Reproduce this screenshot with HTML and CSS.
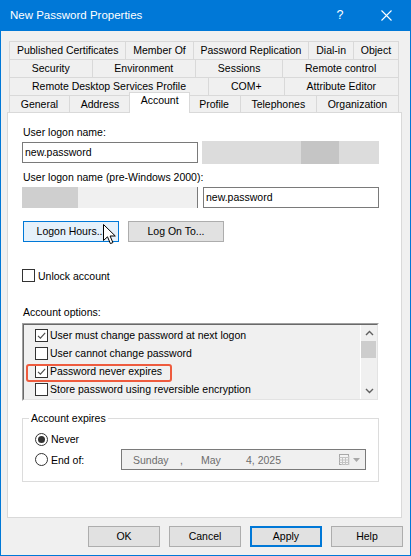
FILE: index.html
```html
<!DOCTYPE html>
<html lang="en">
<head>
<meta charset="utf-8">
<title>New Password Properties</title>
<link rel="stylesheet" href="styles.css">
</head>
<body>
<div class="window">
  <div class="titlebar">
    <span class="title">New Password Properties</span>
    <span class="caption-btn help">?</span>
    <span class="caption-btn close">
      <svg width="11" height="11" viewBox="0 0 11 11"><path d="M0.5 0.5 L10.5 10.5 M10.5 0.5 L0.5 10.5" stroke="#fff" stroke-width="1.1" fill="none"/></svg>
    </span>
  </div>

  <div class="body">
    <div class="tabs">
      <div class="tabrow">
        <div class="tab">Published Certificates</div>
        <div class="tab">Member Of</div>
        <div class="tab">Password Replication</div>
        <div class="tab">Dial-in</div>
        <div class="tab">Object</div>
      </div>
      <div class="tabrow">
        <div class="tab">Security</div>
        <div class="tab">Environment</div>
        <div class="tab">Sessions</div>
        <div class="tab">Remote control</div>
      </div>
      <div class="tabrow">
        <div class="tab">Remote Desktop Services Profile</div>
        <div class="tab">COM+</div>
        <div class="tab">Attribute Editor</div>
      </div>
      <div class="tabrow front">
        <div class="tab">General</div>
        <div class="tab">Address</div>
        <div class="tab sel">Account</div>
        <div class="tab">Profile</div>
        <div class="tab">Telephones</div>
        <div class="tab">Organization</div>
      </div>
    </div>

    <div class="panel">
      <div class="lbl">User logon name:</div>
      <div class="field-row">
        <div class="textbox">new.password</div>
        <div class="mask upn-suffix"><span class="spot"></span></div>
      </div>

      <div class="lbl gap">User logon name (pre-Windows 2000):</div>
      <div class="field-row">
        <div class="mask domain"><span class="spot"></span></div>
        <div class="textbox after-domain">new.password</div>
      </div>

      <div class="btn-row">
        <div class="btn hover">Logon Hours...
          <svg class="pointer" width="14" height="21" viewBox="0 0 14 21"><path d="M0.5 0.5 L0.5 16.5 L4.5 12.8 L7.4 19.6 L9.9 18.6 L7.1 12 L12.3 12 Z" fill="#fff" stroke="#000" stroke-width="1" stroke-linejoin="miter"/></svg>
        </div>
        <div class="btn">Log On To...</div>
      </div>

      <div class="check-row unlock">
        <span class="box"></span><span class="check-text">Unlock account</span>
      </div>

      <div class="lbl options-lbl">Account options:</div>
      <div class="listbox">
        <div class="listbox-in">
          <div class="items">
            <div class="item"><span class="box"><svg width="11" height="11" viewBox="0 0 11 11"><path d="M2 5.8 L4.4 8.2 L9.2 2.8" stroke="#4a4a4a" stroke-width="1.1" fill="none"/></svg></span><span class="check-text">User must change password at next logon</span></div>
            <div class="item"><span class="box"></span><span class="check-text">User cannot change password</span></div>
            <div class="item"><span class="box"><svg width="11" height="11" viewBox="0 0 11 11"><path d="M2 5.8 L4.4 8.2 L9.2 2.8" stroke="#4a4a4a" stroke-width="1.1" fill="none"/></svg></span><span class="check-text">Password never expires</span></div>
            <div class="item"><span class="box"></span><span class="check-text">Store password using reversible encryption</span></div>
          </div>
          <div class="scrollbar">
            <div class="sb-arrow"><svg width="9" height="6" viewBox="0 0 9 6"><path d="M1 5 L4.5 1.5 L8 5" stroke="#606060" stroke-width="1.4" fill="none"/></svg></div>
            <div class="sb-thumb"></div>
            <div class="sb-track"></div>
            <div class="sb-arrow"><svg width="9" height="6" viewBox="0 0 9 6"><path d="M1 1 L4.5 4.5 L8 1" stroke="#606060" stroke-width="1.4" fill="none"/></svg></div>
          </div>
        </div>
        <div class="highlight"></div>
      </div>

      <div class="group">
        <span class="legend">Account expires</span>
        <div class="radio-row">
          <span class="radio on"></span><span class="check-text">Never</span>
        </div>
        <div class="radio-row end-row">
          <span class="radio"></span><span class="check-text">End of:</span>
          <div class="datepicker">
            <span class="d-day">Sunday</span>
            <span class="d-comma">,</span>
            <span class="d-month">May</span>
            <span class="d-year">4, 2025</span>
            <svg class="cal" width="11" height="11" viewBox="0 0 11 11">
              <rect x="0.5" y="0.5" width="9" height="10" fill="#f4f4f4" stroke="#a8a8a8"/>
              <path d="M0.5 3.5 H9.5 M0.5 6 H9.5 M0.5 8.5 H9.5 M3.5 3.5 V10.5 M6.5 3.5 V10.5" stroke="#c4c4c4" stroke-width="1"/>
              <path d="M10 2 V11 H2" stroke="#d4d4d4" stroke-width="1" fill="none"/>
            </svg>
            <svg class="drop" width="7" height="4" viewBox="0 0 7 4"><path d="M0 0 H7 L3.5 4 Z" fill="#a8a8a8"/></svg>
          </div>
        </div>
      </div>
    </div>

    <div class="actions">
      <div class="btn wide">OK</div>
      <div class="btn wide">Cancel</div>
      <div class="btn wide default">Apply</div>
      <div class="btn wide">Help</div>
    </div>
  </div>
</div>
</body>
</html>
```
FILE: styles.css
```css
* { box-sizing: border-box; }

body {
  margin: 0;
  font: 10.5px "Liberation Sans", Arial, sans-serif;
  color: #000;
  background: #fff;
}

.window {
  width: 411px;
  height: 556px;
  border: 1px solid #0078d7;
  border-top: 0;
  background: #f0f0f0;
  display: flex;
  flex-direction: column;
}

/* caption */
.titlebar {
  height: 31px;
  margin: 0 -1px;
  background: #0078d7;
  color: #fff;
  display: flex;
  align-items: center;
  padding: 0 2px 0 10px;
}
.title { flex: 1; font-size: 11.5px; line-height: 31px; }
.caption-btn {
  width: 46px;
  height: 31px;
  display: flex;
  align-items: center;
  justify-content: center;
}
.help { font-size: 12.5px; padding-bottom: 1px; }
.close svg { display: block; }

.body {
  flex: 1;
  padding: 10px 8px 0 6px;
  display: flex;
  flex-direction: column;
}

/* multi-row tab strip */
.tabs { margin-left: 2px; width: 390px; }
.tabrow { display: flex; height: 18px; }
.tab {
  flex: 1 1 auto;
  height: 18px;
  margin-left: -1px;
  border: 1px solid #d9d9d9;
  border-bottom: 0;
  background: #f0f0f0;
  text-align: center;
  line-height: 16px;
  white-space: nowrap;
}
.tab:first-child { margin-left: 0; }
.tabrow.front { height: 17px; }
.front .tab { height: 17px; line-height: 15px; padding-top: 1px; }
.front .tab.sel {
  position: relative;
  z-index: 2;
  height: 21px;
  margin: -3px -2px 0 -2px;
  background: #fff;
  line-height: 15px;
  padding-top: 0;
}

/* page */
.panel {
  position: relative;
  z-index: 1;
  width: 395px;
  height: 406px;
  border: 1px solid #d9d9d9;
  background: #fff;
  padding: 13px 0 0 14px;
}

.lbl { height: 13px; line-height: 13px; padding-left: 1px; }
.lbl.gap { margin-top: 8px; }

.field-row {
  display: flex;
  align-items: center;
  height: 21px;
  margin-top: 3px;
}
.textbox {
  width: 176px;
  height: 21px;
  border: 1px solid #7a7a7a;
  background: #fff;
  padding-left: 2px;
  line-height: 19px;
}
.textbox.after-domain { margin-left: 5px; }

.mask { display: flex; }
.mask .spot { display: block; height: 100%; }
.upn-suffix {
  width: 177px;
  height: 23px;
  margin-left: 4px;
  background: #dcdcdc;
}
.upn-suffix .spot { margin-left: 99px; width: 38px; background: #c5c5c5; }
.domain {
  width: 176px;
  height: 21px;
  background: #f0f0f0;
  border-right: 1px solid #7a7a7a;
}
.domain .spot { width: 56px; background: #cfcfcf; }

/* push buttons */
.btn-row { display: flex; gap: 9px; margin: 13px 0 0 1px; }
.btn {
  width: 96px;
  height: 21px;
  border: 1px solid #adadad;
  background: #e1e1e1;
  text-align: center;
  line-height: 19px;
  white-space: nowrap;
}
.btn.hover {
  position: relative;
  background: #e5f1fb;
  border-color: #0078d7;
}
.pointer { position: absolute; left: 79px; top: 2px; }

/* check boxes */
.box {
  width: 13px;
  height: 13px;
  flex: none;
  border: 1px solid #333;
  background: #fff;
  display: flex;
  align-items: center;
  justify-content: center;
}
.box svg { display: block; }
.check-text { margin-left: 3px; white-space: nowrap; }
.check-row { display: flex; align-items: center; height: 13px; }
.unlock { margin-top: 27px; }

.options-lbl { margin-top: 24px; }

/* options list */
.listbox {
  position: relative;
  width: 357px;
  height: 78px;
  margin-top: 4px;
  border: 1px solid;
  border-color: #a0a0a0 #fff #fff #a0a0a0;
}
.listbox-in {
  height: 100%;
  border: 1px solid;
  border-color: #696969 #e3e3e3 #e3e3e3 #696969;
  background: #f0f0f0;
  display: flex;
}
.items { flex: 1; padding-top: 1px; }
.item {
  height: 18px;
  display: flex;
  align-items: center;
  padding-left: 11px;
}
.item .check-text { margin-left: 2px; }
.scrollbar {
  width: 17px;
  border-left: 1px solid #fff;
  display: flex;
  flex-direction: column;
}
.sb-arrow {
  height: 16px;
  display: flex;
  align-items: center;
  justify-content: center;
}
.sb-arrow svg { display: block; }
.sb-thumb { height: 17px; margin-right: 1px; background: #cdcdcd; }
.sb-track { flex: 1; }
.highlight {
  position: absolute;
  left: 3px;
  top: 40px;
  width: 146px;
  height: 18px;
  border: 2px solid #ee5b3e;
  border-radius: 3px;
}

/* account expires group */
.group {
  position: relative;
  width: 357px;
  margin-top: 17px;
  border: 1px solid #dcdcdc;
  padding: 13px 12px 11px 12px;
}
.legend {
  position: absolute;
  left: 6px;
  top: -7px;
  padding: 0 2px;
  background: #fff;
  line-height: 13px;
}
.radio-row { display: flex; align-items: center; height: 14px; }
.radio-row.end-row { height: 21px; margin-top: 3px; }
.radio {
  width: 13px;
  height: 13px;
  flex: none;
  border: 1px solid #333;
  border-radius: 50%;
  background: #fff;
  display: flex;
  align-items: center;
  justify-content: center;
}
.radio.on::after {
  content: "";
  width: 7px;
  height: 7px;
  border-radius: 50%;
  background: #333;
}

.datepicker {
  margin-left: auto;
  width: 245px;
  height: 21px;
  border: 1px solid #7a7a7a;
  background: #f0f0f0;
  color: #6d6d6d;
  display: flex;
  align-items: center;
  padding-left: 11px;
  white-space: nowrap;
}
.d-day { width: 47px; }
.d-comma { width: 21px; }
.d-month { width: 45px; }
.d-year { width: 93px; }
.cal { display: block; margin-left: 0; }
.drop { display: block; margin-left: 3px; }

/* dialog buttons */
.actions {
  display: flex;
  justify-content: flex-end;
  gap: 9px;
  margin: 8px -1px 0 0;
}
.btn.wide { width: 72px; }
.btn.default { border: 2px solid #0078d7; line-height: 17px; }
```
